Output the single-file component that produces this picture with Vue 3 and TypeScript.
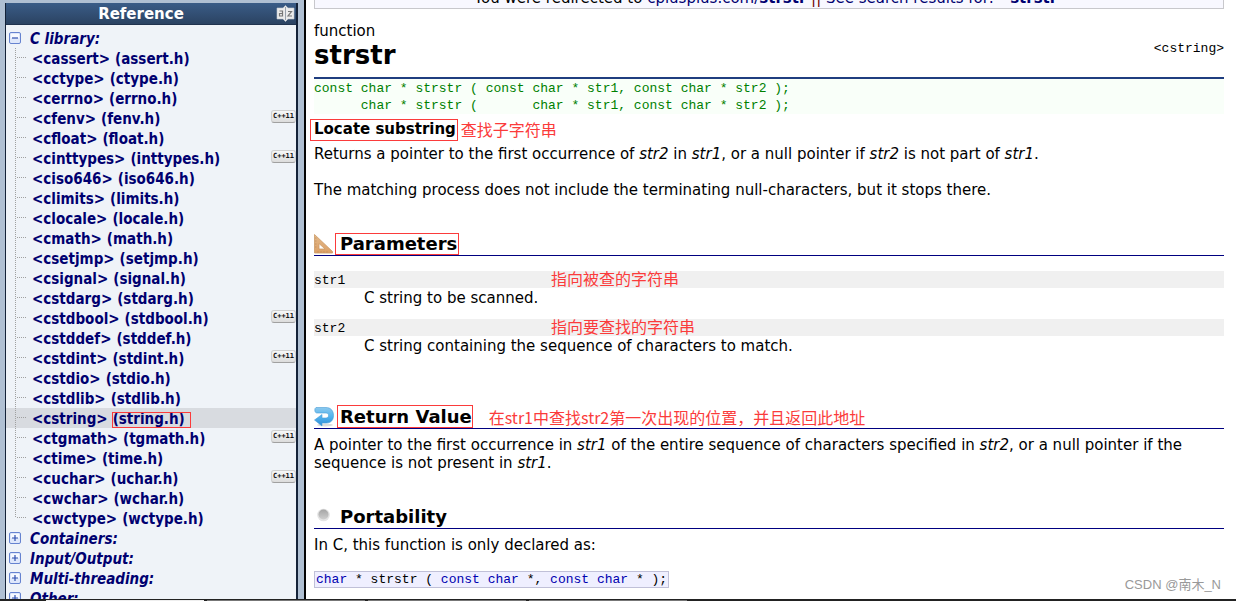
<script setup lang="ts">
interface Header {
  name: string
  legacy: string
  cpp11?: boolean
  current?: boolean
}

const headers: Header[] = [
  { name: 'cassert', legacy: 'assert.h' },
  { name: 'cctype', legacy: 'ctype.h' },
  { name: 'cerrno', legacy: 'errno.h' },
  { name: 'cfenv', legacy: 'fenv.h', cpp11: true },
  { name: 'cfloat', legacy: 'float.h' },
  { name: 'cinttypes', legacy: 'inttypes.h', cpp11: true },
  { name: 'ciso646', legacy: 'iso646.h' },
  { name: 'climits', legacy: 'limits.h' },
  { name: 'clocale', legacy: 'locale.h' },
  { name: 'cmath', legacy: 'math.h' },
  { name: 'csetjmp', legacy: 'setjmp.h' },
  { name: 'csignal', legacy: 'signal.h' },
  { name: 'cstdarg', legacy: 'stdarg.h' },
  { name: 'cstdbool', legacy: 'stdbool.h', cpp11: true },
  { name: 'cstddef', legacy: 'stddef.h' },
  { name: 'cstdint', legacy: 'stdint.h', cpp11: true },
  { name: 'cstdio', legacy: 'stdio.h' },
  { name: 'cstdlib', legacy: 'stdlib.h' },
  { name: 'cstring', legacy: 'string.h', current: true },
  { name: 'ctgmath', legacy: 'tgmath.h', cpp11: true },
  { name: 'ctime', legacy: 'time.h' },
  { name: 'cuchar', legacy: 'uchar.h', cpp11: true },
  { name: 'cwchar', legacy: 'wchar.h' },
  { name: 'cwctype', legacy: 'wctype.h' },
]

const sections: string[] = ['Containers:', 'Input/Output:', 'Multi-threading:', 'Other:']

const prototype =
  'const char * strstr ( const char * str1, const char * str2 );\n' +
  '      char * strstr (       char * str1, const char * str2 );'
</script>

<template>
  <div class="page">
    <div class="columns">
      <aside class="side">
        <nav class="panel" aria-label="Reference">
          <header class="panel-head">
            <h2>Reference</h2>
            <button class="az" type="button" aria-label="Sort alphabetically">
              <svg width="19" height="17" viewBox="0 0 19 17">
                <path d="M1 3H7L9.500 0.500L12 3H18V14H12L9.500 16.500L7 14H1Z" fill="#ececec" stroke="#c3c9d1" stroke-width="0.600" />
                <path d="M9.500 2V15" stroke="#9aa2ac" stroke-width="1" />
                <path d="M3.500 6H6.500V11H3.500V8.500H6.500M12 6.500H15.500L12 11H16" fill="none" stroke="#777" stroke-width="1.200" />
              </svg>
            </button>
          </header>
          <ul class="tree">
            <li class="row">
              <button class="toggle" type="button" aria-label="Collapse C library">
                <svg width="12" height="12" viewBox="0 0 12 12">
                  <rect x="0.500" y="0.500" width="11" height="11" rx="1.500" fill="#dfe8fb" stroke="#6683d0" />
                  <rect x="2" y="2" width="8" height="4" fill="#f7faff" />
                  <path d="M3 6H9" stroke="#2f4fb0" stroke-width="1.200" />
                </svg>
              </button>
              <a class="section" href="#clibrary">C library:</a>
            </li>
            <li v-for="(h, i) in headers" :key="h.name" class="row" :class="{ current: h.current }">
              <svg class="branch" width="12" height="20" viewBox="0 0 12 20" aria-hidden="true">
                <path :d="i === headers.length - 1 ? 'M0.5 0V10' : 'M0.5 0V20'" />
                <path d="M2 9.500H12" />
              </svg>
              <a class="leaf" :href="'#' + h.name">
                <span>&lt;{{ h.name }}&gt;</span>
                <span :class="{ marked: h.current }">({{ h.legacy }})</span>
              </a>
              <span v-if="h.cpp11" class="badge">C++11</span>
            </li>
            <li v-for="s in sections" :key="s" class="row">
              <button class="toggle" type="button" :aria-label="'Expand ' + s">
                <svg width="12" height="12" viewBox="0 0 12 12">
                  <rect x="0.500" y="0.500" width="11" height="11" rx="1.500" fill="#dfe8fb" stroke="#6683d0" />
                  <rect x="2" y="2" width="8" height="4" fill="#f7faff" />
                  <path d="M3 6H9M6 3V9" stroke="#2f4fb0" stroke-width="1.200" />
                </svg>
              </button>
              <a class="section" href="#">{{ s }}</a>
            </li>
          </ul>
        </nav>
      </aside>

      <main class="doc">
        <div class="notice">
          <p>You were redirected to <a href="#">cplusplus.com/<b>strstr</b></a> <i class="bar">||</i> <a href="#">See search results for:&nbsp; "<b>strstr</b>"</a></p>
        </div>

        <header class="title">
          <div>
            <p class="kind">function</p>
            <h1>strstr</h1>
          </div>
          <a class="include" href="#cstring">&lt;cstring&gt;</a>
        </header>
        <pre class="proto">{{ prototype }}</pre>

        <div class="summary">
          <strong class="boxed">Locate substring</strong>
          <span class="note">查找子字符串</span>
        </div>
        <p>Returns a pointer to the first occurrence of <i>str2</i> in <i>str1</i>, or a null pointer if <i>str2</i> is not part of <i>str1</i>.</p>
        <p class="gap">The matching process does not include the terminating null-characters, but it stops there.</p>

        <section>
          <div class="heading">
            <svg width="20" height="20" viewBox="0 0 20 20" aria-hidden="true">
              <defs>
                <linearGradient id="wood" x1="0" y1="0" x2="0" y2="1">
                  <stop offset="0" stop-color="#e3b98a" />
                  <stop offset="1" stop-color="#dca066" />
                </linearGradient>
              </defs>
              <path d="M0.500 0.500L18.500 17.500V19H0.500ZM5 9.500V15H11Z" fill="url(#wood)" fill-rule="evenodd" stroke="#cb9a66" stroke-width="0.800" />
              <path d="M1 4H2.500M1 7H2.500M1 10H2.500M1 13H2.500M4 18.500V17.200M7 18.500V17.200M10 18.500V17.200M13 18.500V17.200" stroke="#b98550" stroke-width="0.600" />
            </svg>
            <h2><span class="flagged">Parameters</span></h2>
          </div>
          <dl>
            <dt><code>str1</code><span class="note">指向被查的字符串</span></dt>
            <dd>C string to be scanned.</dd>
            <dt><code>str2</code><span class="note">指向要查找的字符串</span></dt>
            <dd>C string containing the sequence of characters to match.</dd>
          </dl>
        </section>

        <section>
          <div class="heading">
            <svg width="20" height="20" viewBox="0 0 20 20" aria-hidden="true">
              <defs>
                <linearGradient id="arrow" x1="0" y1="0" x2="0" y2="1">
                  <stop offset="0" stop-color="#8cc9ee" />
                  <stop offset="0.500" stop-color="#52b3ee" />
                  <stop offset="1" stop-color="#2b8bd6" />
                </linearGradient>
              </defs>
              <ellipse cx="11" cy="18" rx="8" ry="1.500" fill="#ddd" />
              <path d="M2 0.500H12C17 0.500 19.500 4 19.500 8.500C19.500 13 17 16 12.500 16H8V19L0.500 13L8 7.500V11H12C13.600 11 14.500 10 14.500 8.500C14.500 6.700 13.600 6 12 6H3C1.800 6 0.800 5 0.800 3C0.800 1.700 1.200 1 2 0.500Z" fill="url(#arrow)" stroke="#4a9ed6" stroke-width="0.600" />
            </svg>
            <h2><span class="marked">Return Value</span></h2>
            <span class="note">在str1中查找str2第一次出现的位置，并且返回此地址</span>
          </div>
          <p class="body">A pointer to the first occurrence in <i>str1</i> of the entire sequence of characters specified in <i>str2</i>, or a null pointer if the sequence is not present in <i>str1</i>.</p>
        </section>

        <section>
          <div class="heading">
            <svg width="20" height="20" viewBox="0 0 20 20" aria-hidden="true">
              <defs>
                <linearGradient id="ball" x1="0" y1="0" x2="0" y2="1">
                  <stop offset="0" stop-color="#a5a5a5" />
                  <stop offset="1" stop-color="#cfcfcf" />
                </linearGradient>
              </defs>
              <circle cx="9.500" cy="8" r="6.300" fill="#e4e4e4" />
              <circle cx="9.500" cy="7.500" r="5" fill="url(#ball)" />
            </svg>
            <h2>Portability</h2>
          </div>
          <p class="body">In C, this function is only declared as:</p>
          <code class="decl"><b>char</b> * strstr ( <b>const</b> <b>char</b> *, <b>const</b> <b>char</b> * );</code>
        </section>
        <span class="watermark">CSDN @南木_N</span>
      </main>
    </div>
    <div class="strip"><i></i><i></i><i></i><i></i></div>
  </div>
</template>

<style>
body {
  margin: 0;
}
</style>

<style scoped>
.page {
  height: 100vh;
  display: flex;
  flex-direction: column;
  overflow: hidden;
  background: #fff;
  color: #000;
  font-family: Verdana, "DejaVu Sans", "Noto Sans CJK SC", sans-serif;
  font-size: 15px;
  line-height: 18px;
}
h1, h2, p, ul, dl, dd, pre {
  margin: 0;
  padding: 0;
}
a {
  color: inherit;
  text-decoration: none;
}
button {
  display: flex;
  padding: 0;
  border: 0;
  background: none;
  cursor: pointer;
}
.columns {
  flex: 1;
  min-height: 0;
  display: flex;
}
.side {
  box-sizing: border-box;
  flex: 0 0 306px;
  padding: 3px 6px 0 5px;
  overflow: hidden;
  background: #b0c0d3;
  border-right: 2px solid #050505;
}
.panel {
  background: #eff3f8;
  border: solid #142238;
  border-width: 0 2px 0 1px;
}
.panel-head {
  display: flex;
  align-items: center;
  height: 21px;
  padding-right: 1px;
  border-bottom: 1px solid #20334e;
  background: linear-gradient(#3a5c87, #2b4362);
  color: #fff;
}
.panel-head h2 {
  flex: 1;
  text-align: center;
  font-size: 15px;
}
.tree {
  padding-top: 3px;
  list-style: none;
  color: #000070;
  font-family: Tahoma, "DejaVu Sans Condensed", "DejaVu Sans", sans-serif;
  font-stretch: condensed;
  font-weight: bold;
}
.row {
  display: flex;
  height: 20px;
  line-height: 22px;
}
.current {
  background: #d8dbe0;
}
.toggle {
  flex: 0 0 12px;
  margin: 4px 9px 4px 3px;
}
.section {
  font-style: italic;
}
.branch {
  flex: none;
  margin: 0 5px 0 9px;
}
.branch path {
  fill: none;
  stroke: #a0a0a0;
  stroke-dasharray: 1 1;
}
.leaf {
  flex: 1;
  display: flex;
  gap: 5px;
  white-space: nowrap;
}
.marked {
  outline: 1px solid #fb3b3b;
}
.leaf .marked {
  height: 14px;
  margin-top: 5px;
  padding-right: 5px;
  line-height: 13px;
}
.badge {
  box-sizing: border-box;
  width: 25px;
  height: 13px;
  margin-top: 2px;
  border: 1px solid #d0d0d0;
  border-bottom-color: #a0a0a0;
  border-radius: 3px;
  background: linear-gradient(#f7f7f7, #dcdcdc);
  color: #111;
  font: bold 7px/11px "DejaVu Sans Mono", monospace;
  text-align: center;
}
.doc {
  flex: 1;
  min-width: 0;
  padding: 0 12px 0 8px;
}
.notice {
  display: flex;
  align-items: flex-end;
  justify-content: center;
  height: 8px;
  overflow: hidden;
  border: 1px solid #c8c8cc;
  border-top: 0;
  background: #f8f8ff;
}
.notice p {
  line-height: 20px;
}
.notice a {
  color: #000070;
}
.bar {
  color: #700000;
  font-style: normal;
}
.title {
  display: flex;
  justify-content: space-between;
  align-items: center;
  padding: 13px 0 7px;
  border-bottom: 2px solid #1f3d7f;
}
h1 {
  font-size: 26px;
  line-height: 30px;
}
.include,
.proto,
code {
  font-family: "Liberation Mono", monospace;
  font-size: 13px;
  line-height: 17px;
}
.include {
  padding-top: 4px;
}
.proto {
  padding-top: 1px;
  background: #f9fff9;
  color: #008000;
}
.summary {
  display: flex;
  align-items: center;
  gap: 3px;
  height: 22px;
  margin: 5px 0 4px -4px;
}
.boxed {
  padding: 0 1px 2px 3px;
  border: 1px solid #fb3b3b;
}
.note {
  color: #fb3b3b;
  font-family: "Noto Sans CJK SC", sans-serif;
  font-size: 16px;
  line-height: 14px;
}
.summary .note {
  padding-bottom: 3px;
}
.gap {
  margin-top: 18px;
}
section {
  margin-top: 34px;
}
.heading {
  display: flex;
  align-items: center;
  height: 22px;
  border-bottom: 1px solid #000080;
}
.heading h2 {
  margin-left: 6px;
  font-size: 18px;
  line-height: 20px;
}
.heading h2 .marked {
  padding: 0 0 0 2px;
  margin: 0 0 0 -2px;
}
.heading h2 .flagged {
  display: block;
  margin-left: -5px;
  padding: 0 1px 0 4px;
  border: 1px solid #fb3b3b;
}
.heading .note {
  margin-left: 17px;
}
dl {
  padding: 15px 0 5px;
}
dt {
  display: flex;
  height: 17px;
  background: #f0f0f0;
}
dt code {
  width: 237px;
  line-height: 19px;
}
dd {
  margin: 1px 0 12px 50px;
}
.body {
  margin-top: 7px;
}
.decl {
  display: inline-block;
  margin-top: 17px;
  padding: 0 1px;
  border: 1px solid #c0c0d8;
  background: #efefff;
  line-height: 15px;
}
.decl b {
  color: #0000b0;
  font-weight: normal;
}
.watermark {
  position: absolute;
  right: 15px;
  bottom: 7px;
  color: #999;
  font-family: "Liberation Sans", "Noto Sans CJK SC", sans-serif;
  font-size: 13px;
}
.strip {
  display: flex;
  gap: 3px;
  height: 1px;
  padding-left: 46px;
  border-top: 1px solid #222;
  background: #222;
}
.strip i {
  width: 158px;
  background: #777;
}
.strip i:first-child {
  background: #eee;
}
</style>
